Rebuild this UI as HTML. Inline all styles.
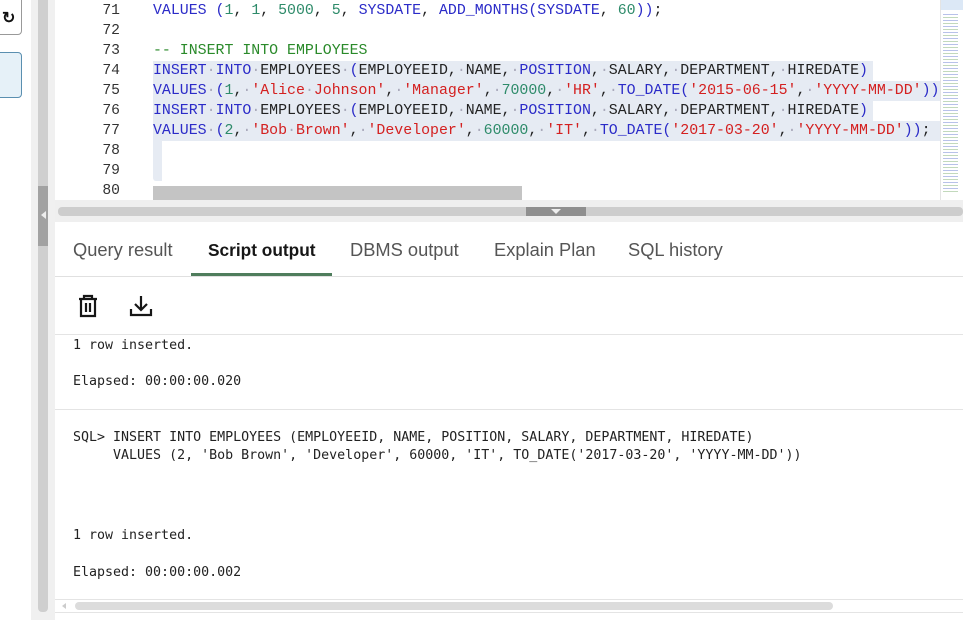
<!DOCTYPE html>
<html><head><meta charset="utf-8"><style>
*{margin:0;padding:0;box-sizing:border-box}
body{width:963px;height:620px;overflow:hidden;background:#fff;position:relative;font-family:"Liberation Sans",sans-serif}
.a{position:absolute}
.code{font-family:"Liberation Mono","DejaVu Sans Mono",monospace;font-size:14.9px;line-height:20px;white-space:pre}
.ln{position:absolute;left:60px;width:60px;text-align:right;color:#333;font-family:"Liberation Mono",monospace;font-size:14.7px;line-height:20px}
.k{color:#2b2bc8}.s{color:#d42020}.n{color:#2e8b6a}.c{color:#2a8a2a}.d{color:#aab}.b{color:#222}
.out{font-family:"DejaVu Sans Mono",monospace;font-size:13.3px;line-height:18px;white-space:pre;color:#222}
.tab{position:absolute;top:239px;font-size:18.3px;color:#555}
</style></head><body>
<div class="a" style="left:-10px;top:-5px;width:32px;height:40px;border:1px solid #999;border-radius:4px;background:#fff"></div>
<div class="a" style="left:2px;top:8px;font-size:16px;font-weight:bold;color:#111">↻</div>
<div class="a" style="left:-10px;top:52px;width:32px;height:46px;border:1px solid #5a8fb0;border-radius:4px;background:#e6f1f8"></div>
<div class="a" style="left:31px;top:0;width:24px;height:620px;background:#f0f0f0"></div>
<div class="a" style="left:38px;top:0;width:10px;height:612px;background:#cfcfcf;border-radius:0 0 4px 4px"></div>
<div class="a" style="left:38px;top:186px;width:10px;height:60px;background:#a2a2a2"></div>
<div class="a" style="left:41px;top:211px;width:0;height:0;border-top:4px solid transparent;border-bottom:4px solid transparent;border-right:5px solid #eee"></div>
<div class="a" style="left:55px;top:0;width:908px;height:200px;background:#fff"></div>
<div class="a" style="left:153px;top:61px;width:720px;height:20px;background:#e6ebf3"></div>
<div class="a" style="left:153px;top:81px;width:787px;height:20px;background:#e6ebf3"></div>
<div class="a" style="left:153px;top:101px;width:720px;height:20px;background:#e6ebf3"></div>
<div class="a" style="left:153px;top:121px;width:787px;height:20px;background:#e6ebf3"></div>
<div class="a" style="left:153px;top:141px;width:9px;height:40px;background:#e6ebf3;border-radius:0 0 0 3px"></div>
<div class="ln" style="top:1px">71<br>72<br>73<br>74<br>75<br>76<br>77<br>78<br>79<br>80</div>
<div class="a code" style="left:153px;top:1px"><span class="k">VALUES (</span><span class="n">1</span><span class="b">, </span><span class="n">1</span><span class="b">, </span><span class="n">5000</span><span class="b">, </span><span class="n">5</span><span class="b">, </span><span class="k">SYSDATE</span><span class="b">, </span><span class="k">ADD_MONTHS(SYSDATE</span><span class="b">, </span><span class="n">60</span><span class="k">))</span><span class="b">;</span>

<span class="c">-- INSERT INTO EMPLOYEES</span>
<span class="k">INSERT</span><span class="d">·</span><span class="k">INTO</span><span class="d">·</span><span class="b">EMPLOYEES</span><span class="d">·</span><span class="k">(</span><span class="b">EMPLOYEEID,</span><span class="d">·</span><span class="b">NAME,</span><span class="d">·</span><span class="k">POSITION</span><span class="b">,</span><span class="d">·</span><span class="b">SALARY,</span><span class="d">·</span><span class="b">DEPARTMENT,</span><span class="d">·</span><span class="b">HIREDATE</span><span class="k">)</span>
<span class="k">VALUES</span><span class="d">·</span><span class="k">(</span><span class="n">1</span><span class="b">,</span><span class="d">·</span><span class="s">'Alice</span><span class="d">·</span><span class="s">Johnson'</span><span class="b">,</span><span class="d">·</span><span class="s">'Manager'</span><span class="b">,</span><span class="d">·</span><span class="n">70000</span><span class="b">,</span><span class="d">·</span><span class="s">'HR'</span><span class="b">,</span><span class="d">·</span><span class="k">TO_DATE(</span><span class="s">'2015-06-15'</span><span class="b">,</span><span class="d">·</span><span class="s">'YYYY-MM-DD'</span><span class="k">))</span>
<span class="k">INSERT</span><span class="d">·</span><span class="k">INTO</span><span class="d">·</span><span class="b">EMPLOYEES</span><span class="d">·</span><span class="k">(</span><span class="b">EMPLOYEEID,</span><span class="d">·</span><span class="b">NAME,</span><span class="d">·</span><span class="k">POSITION</span><span class="b">,</span><span class="d">·</span><span class="b">SALARY,</span><span class="d">·</span><span class="b">DEPARTMENT,</span><span class="d">·</span><span class="b">HIREDATE</span><span class="k">)</span>
<span class="k">VALUES</span><span class="d">·</span><span class="k">(</span><span class="n">2</span><span class="b">,</span><span class="d">·</span><span class="s">'Bob</span><span class="d">·</span><span class="s">Brown'</span><span class="b">,</span><span class="d">·</span><span class="s">'Developer'</span><span class="b">,</span><span class="d">·</span><span class="n">60000</span><span class="b">,</span><span class="d">·</span><span class="s">'IT'</span><span class="b">,</span><span class="d">·</span><span class="k">TO_DATE(</span><span class="s">'2017-03-20'</span><span class="b">,</span><span class="d">·</span><span class="s">'YYYY-MM-DD'</span><span class="k">))</span><span class="b">;</span></div>
<div class="a" style="left:940px;top:0;width:23px;height:200px;background:#fff;border-left:1px solid #e4e4e4;overflow:hidden">
<div style="height:10px;background:#dce8f6"></div>
<div style="margin:4px 2px;height:180px;background:repeating-linear-gradient(180deg,#9aa7e0 0 1px,#fff 1px 3px,#a8c9a0 3px 4px,#fff 4px 6px);opacity:.7;width:15px"></div>
</div>
<div class="a" style="left:153px;top:186px;width:369px;height:14px;background:#c4c4c4"></div>
<div class="a" style="left:55px;top:200px;width:908px;height:22px;background:#efefef"></div>
<div class="a" style="left:58px;top:207px;width:905px;height:9px;background:#cdcdcd;border-radius:4px"></div>
<div class="a" style="left:526px;top:207px;width:60px;height:9px;background:#8f8f8f"></div>
<div class="a" style="left:551px;top:209px;width:0;height:0;border-left:5px solid transparent;border-right:5px solid transparent;border-top:5px solid #eee"></div>
<div class="a" style="left:55px;top:222px;width:908px;height:390px;background:#fff"></div>
<div class="tab" style="left:73px">Query result</div>
<div class="tab" style="left:208px;color:#161616;font-weight:bold;font-size:17.3px;top:240px">Script output</div>
<div class="tab" style="left:350px">DBMS output</div>
<div class="tab" style="left:494px">Explain Plan</div>
<div class="tab" style="left:628px">SQL history</div>
<div class="a" style="left:55px;top:276px;width:908px;height:1px;background:#e0e0e0"></div>
<div class="a" style="left:191px;top:273px;width:141px;height:3px;background:#4f7d5c"></div>
<svg class="a" style="left:76px;top:293px" width="24" height="26" viewBox="0 0 24 26" fill="none" stroke="#161616" stroke-width="2.2">
<path d="M3 6H21M8 6V3H16V6M5 6V23H19V6M10 10V19M14 10V19"/></svg>
<svg class="a" style="left:128px;top:294px" width="26" height="24" viewBox="0 0 26 24" fill="none" stroke="#161616" stroke-width="2.2">
<path d="M13 2V15M7 10L13 16L19 10M3 15V21H23V15"/></svg>
<div class="a" style="left:55px;top:334px;width:908px;height:1px;background:#e4e4e4"></div>
<div class="a out" style="left:73px;top:337px">1 row inserted.

Elapsed: 00:00:00.020</div>
<div class="a" style="left:55px;top:409px;width:908px;height:1px;background:#e4e4e4"></div>
<div class="a out" style="left:73px;top:429px">SQL> INSERT INTO EMPLOYEES (EMPLOYEEID, NAME, POSITION, SALARY, DEPARTMENT, HIREDATE)
     VALUES (2, 'Bob Brown', 'Developer', 60000, 'IT', TO_DATE('2017-03-20', 'YYYY-MM-DD'))</div>
<div class="a out" style="left:73px;top:527px">1 row inserted.</div>
<div class="a out" style="left:73px;top:564px">Elapsed: 00:00:00.002</div>
<div class="a" style="left:55px;top:599px;width:908px;height:1px;background:#e4e4e4"></div>
<div class="a" style="left:75px;top:602px;width:758px;height:8px;background:#dcdcdc;border-radius:4px"></div>
<div class="a" style="left:62px;top:603px;width:0;height:0;border-top:3px solid transparent;border-bottom:3px solid transparent;border-right:4px solid #ccc"></div>
<div class="a" style="left:55px;top:612px;width:908px;height:1px;background:#e4e4e4"></div>
</body></html>
